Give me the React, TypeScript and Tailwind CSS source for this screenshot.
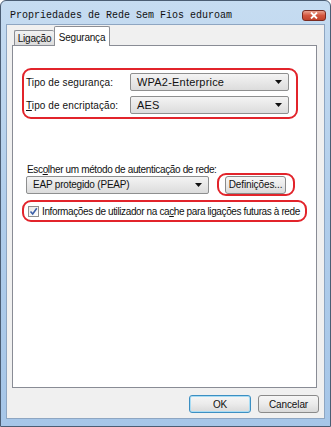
import React from 'react'

const ui = { fontFamily: '"Liberation Sans", Arial, sans-serif' }

function Combo({ text, width, big }: { text: string; width: string; big?: boolean }) {
  return (
    <div
      className={`flex h-[18px] ${width} items-center justify-between rounded-[2px] border border-[#8e8f8f] bg-gradient-to-b from-[#f4f4f4] to-[#dcdcdc] pl-[6px] pr-[6px]`}
    >
      <span className={big ? 'text-[11px] tracking-[0.2px] text-[#111]' : 'text-[10px] tracking-[-0.2px] text-[#111]'}>{text}</span>
      <svg width="7" height="4" viewBox="0 0 7 4">
        <path d="M0 0 H7 L3.5 4 Z" fill="#111" />
      </svg>
    </div>
  )
}

function Btn({ label, isDefault, width }: { label: string; isDefault?: boolean; width: string }) {
  return (
    <div
      className={`flex h-[18px] ${width} items-center justify-center rounded-[3px] border bg-gradient-to-b from-[#f6f6f6] via-[#ebebeb] to-[#d9d9d9] text-[10px] tracking-[-0.1px] text-[#111] ${
        isDefault ? 'border-[#3c8fc2] shadow-[inset_0_0_0_1px_#a8dcf4]' : 'border-[#8a8a8a]'
      }`}
    >
      {label}
    </div>
  )
}

export default function App() {
  return (
    <div
      className="flex h-[427px] w-[331px] flex-col overflow-hidden rounded-t-[6px] border border-[#4b5d73] bg-gradient-to-b from-[#c6dcf1] via-[#b0cdeb] to-[#a6c6e8]"
      style={ui}
    >
      {/* title bar */}
      <div className="flex h-[23px] shrink-0 items-center justify-between pl-[9px] pr-[4px]">
        <span className="pt-[6px] text-[10px] text-[#111]" style={{ fontFamily: '"Liberation Mono", "Courier New", monospace' }}>
          Propriedades de Rede Sem Fios eduroam
        </span>
        <div className="mt-[5px] flex h-[11px] w-[24px] items-center justify-center rounded-[3px] border border-[#7a2a20] bg-gradient-to-b from-[#e9a08e] via-[#d4563f] to-[#c0432c]">
          <svg width="8" height="7" viewBox="0 0 8 7">
            <path d="M1 0.5 L7 6.5 M7 0.5 L1 6.5" stroke="#fff" strokeWidth="1.8" />
          </svg>
        </div>
      </div>

      {/* body */}
      <div className="mx-[5px] flex flex-1 flex-col border border-[#8ea6c2] bg-[#f0f0f0] text-[10px] tracking-[-0.2px] text-[#111]">
        {/* tabs */}
        <div className="relative z-10 ml-[7px] mt-[1px] flex items-end">
          <div className="flex h-[15px] w-[40px] items-center justify-center rounded-t-[2px] border border-b-0 border-r-0 border-[#8c8e94] bg-gradient-to-b from-[#f2f2f2] to-[#dcdcdc]">
            Ligação
          </div>
          <div className="-mb-px flex h-[20px] w-[56px] items-start justify-center rounded-t-[2px] border border-b-0 border-[#8c8e94] bg-white pt-[3px]">
            Segurança
          </div>
        </div>

        {/* panel */}
        <div className="ml-[5px] flex h-[343px] w-[305px] flex-col border border-[#898c95] bg-white">
          <div className="ml-[9px] mt-[22px] flex h-[51px] w-[276px] flex-col gap-[5px] rounded-[9px] border-2 border-[#e2242b] pl-[2px] pt-[3px] tracking-[0.1px]">
            <div className="flex items-center">
              <span className="w-[104px]">
                Tipo de se<span className="underline">g</span>urança:
              </span>
              <Combo text="WPA2-Enterprice" width="w-[159px]" big />
            </div>
            <div className="flex items-center">
              <span className="w-[104px]">
                <span className="underline">T</span>ipo de encriptação:
              </span>
              <Combo text="AES" width="w-[159px]" big />
            </div>
          </div>

          <div className="ml-[14px] mt-[44px] h-[13px] leading-[13px] tracking-[-0.35px]">
            Esc<span className="underline">o</span>lher um método de autenticação de rede:
          </div>
          <div className="-mt-[3px] flex items-center">
            <div className="ml-[13px]">
              <Combo text="EAP protegido (PEAP)" width="w-[183px]" />
            </div>
            <div className="ml-[8px] flex h-[23px] w-[78px] items-center rounded-[9px] border-2 border-[#e2242b] pl-[6px]">
              <Btn label="Definições..." width="w-[61px]" />
            </div>
          </div>

          <div className="ml-[9px] mt-[4px] flex h-[22px] w-[285px] items-center rounded-[9px] border-2 border-[#e2242b] pl-[4px]">
            <div className="flex h-[11px] w-[11px] shrink-0 items-center justify-center border border-[#8f8f8f] bg-gradient-to-br from-[#e6e6e6] to-white">
              <svg width="9" height="9" viewBox="0 0 9 9">
                <path d="M1.5 4.5 L3.7 7 L7.8 1.3" fill="none" stroke="#3b5fa8" strokeWidth="1.6" />
              </svg>
            </div>
            <span className="ml-[3px] whitespace-nowrap tracking-[-0.38px]">
              Informações de utilizador na ca<span className="underline">c</span>he para ligações futuras à rede
            </span>
          </div>
        </div>

        {/* buttons */}
        <div className="mr-[5px] mt-[7px] flex justify-end gap-[7px]">
          <Btn label="OK" isDefault width="w-[62px]" />
          <Btn label="Cancelar" width="w-[61px]" />
        </div>
      </div>
      <div className="h-[7px] shrink-0" />
    </div>
  )
}
